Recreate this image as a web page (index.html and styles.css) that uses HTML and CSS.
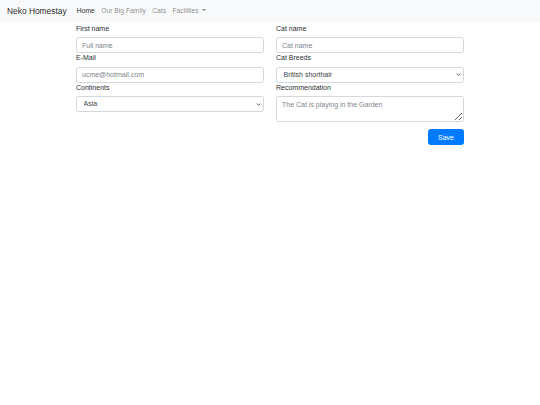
FILE: index.html
```html
<!DOCTYPE html>
<html lang="en">
<head>
<meta charset="utf-8">
<title>Neko Homestay</title>
<link rel="stylesheet" href="styles.css">
</head>
<body>
<nav class="navbar">
  <a class="brand" href="#">Neko Homestay</a>
  <ul class="nav">
    <li><a class="nav-link active" href="#">Home</a></li>
    <li><a class="nav-link" href="#">Our Big Family</a></li>
    <li><a class="nav-link" href="#">Cats</a></li>
    <li><a class="nav-link dropdown" href="#">Facilities<span class="caret"></span></a></li>
  </ul>
</nav>
<main class="container">
  <form class="form">
    <div class="row">
      <div class="col">
        <div class="group">
          <label for="fn">First name</label>
          <input id="fn" class="control" type="text" placeholder="Full name">
        </div>
        <div class="group">
          <label for="em">E-Mail</label>
          <input id="em" class="control" type="email" placeholder="ucme@hotmail.com">
        </div>
        <div class="group">
          <label for="co">Continents</label>
          <div class="select-wrap">
            <select id="co" class="control select">
              <option>Asia</option>
              <option>Europe</option>
              <option>Africa</option>
            </select>
            <svg class="chev" width="5" height="3" viewBox="0 0 5 3"><path d="M0.6 0.5 L2.5 2.3 L4.4 0.5" fill="none" stroke="#555" stroke-width="0.9"/></svg>
          </div>
        </div>
      </div>
      <div class="col">
        <div class="group">
          <label for="cn">Cat name</label>
          <input id="cn" class="control" type="text" placeholder="Cat name">
        </div>
        <div class="group">
          <label for="cb">Cat Breeds</label>
          <div class="select-wrap">
            <select id="cb" class="control select">
              <option>British shorthair</option>
              <option>Persian</option>
            </select>
            <svg class="chev" width="5" height="3" viewBox="0 0 5 3"><path d="M0.6 0.5 L2.5 2.3 L4.4 0.5" fill="none" stroke="#555" stroke-width="0.9"/></svg>
          </div>
        </div>
        <div class="group">
          <label for="rc">Recommendation</label>
          <textarea id="rc" class="control area" placeholder="The Cat is playing in the Garden"></textarea>
        </div>
        <div class="actions">
          <button type="button" class="btn">Save</button>
        </div>
      </div>
    </div>
  </form>
</main>
</body>
</html>
```
FILE: styles.css
```css
html, body {
  margin: 0;
  padding: 0;
  background: #fff;
}
body {
  font-family: "Liberation Sans", Arial, sans-serif;
  font-size: 7px;
  line-height: 1.5;
  color: #2b2f33;
}
.navbar {
  display: flex;
  align-items: center;
  height: 22px;
  padding: 0 7px;
  background: #f8f9fa;
  box-sizing: border-box;
}
.brand {
  font-size: 8.4px;
  line-height: 1.5;
  color: rgba(0,0,0,.88);
  text-decoration: none;
  margin-right: 7px;
}
.nav {
  display: flex;
  list-style: none;
  margin: 0;
  padding: 0;
}
.nav-link {
  display: block;
  padding: 3.4px 3.2px;
  font-size: 6.75px;
  color: rgba(0,0,0,.48);
  text-decoration: none;
}
.nav-link.active {
  color: rgba(0,0,0,.88);
}
.caret {
  display: inline-block;
  margin-left: 3.5px;
  vertical-align: 1.7px;
  border-top: 2px solid;
  border-right: 2px solid transparent;
  border-left: 2px solid transparent;
  border-bottom: 0;
}
.container {
  width: 388px;
  margin: 0 auto;
  padding-top: 1.5px;
}
.row {
  display: grid;
  grid-template-columns: 1fr 1fr;
  column-gap: 12px;
}
.group label {
  display: block;
  margin-bottom: 3.5px;
  line-height: 10px;
}
.control {
  display: block;
  width: 100%;
  height: 16px;
  box-sizing: border-box;
  margin: 0;
  padding: 2px 5px;
  font-family: inherit;
  font-size: 7px;
  line-height: 10px;
  color: #495057;
  background: #fff;
  border: 1px solid #d3d8dd;
  border-radius: 2.5px;
}
.control::placeholder {
  color: #7d858c;
}
.select-wrap {
  position: relative;
}
.select {
  appearance: none;
  -webkit-appearance: none;
  padding: 0 10px 0 6.5px;
  color: #3a3f44;
}
.chev {
  position: absolute;
  right: 3px;
  top: 6.5px;
  pointer-events: none;
}
.area {
  height: 26px;
  resize: vertical;
  padding: 2.5px 5px;
}
.actions {
  display: flex;
  justify-content: flex-end;
  margin-top: 7px;
}
.btn {
  height: 16px;
  width: 36px;
  padding: 0;
  font-family: inherit;
  font-size: 7px;
  color: #fff;
  background: #007bff;
  border: 1px solid #007bff;
  border-radius: 2.5px;
}
```
